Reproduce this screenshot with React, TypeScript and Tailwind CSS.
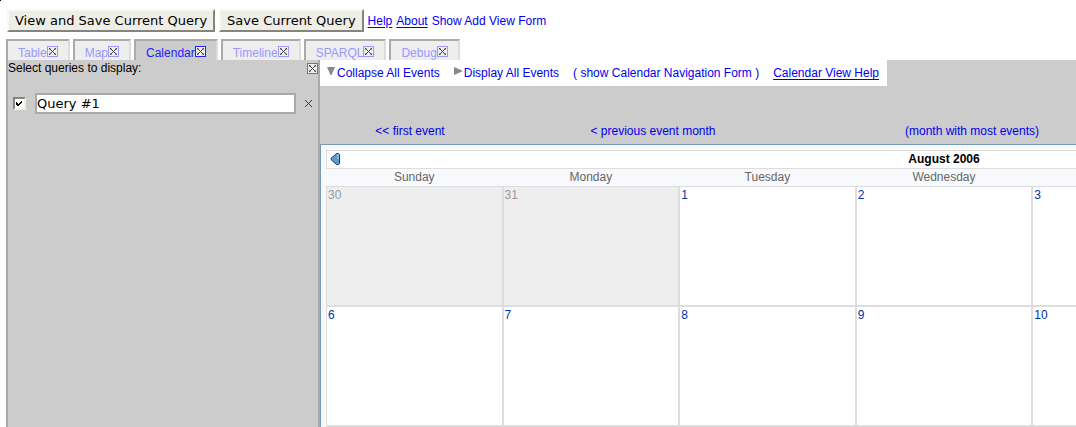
import { useState } from "react";

function CloseBox({ className }: { className: string }) {
  return (
    <svg
      width="11"
      height="11"
      viewBox="0 0 11 11"
      className={className}
      shapeRendering="crispEdges"
      aria-hidden="true"
    >
      <rect x="0.5" y="0.5" width="10" height="10" fill="#eeeeee" stroke="currentColor" />
      <path
        d="M2 2h1v1h-1zM3 3h1v1h-1zM4 4h1v1h-1zM5 5h1v1h-1zM6 6h1v1h-1zM7 7h1v1h-1zM8 8h1v1h-1zM8 2h1v1h-1zM7 3h1v1h-1zM6 4h1v1h-1zM4 6h1v1h-1zM3 7h1v1h-1zM2 8h1v1h-1z"
        fill="#444444"
      />
      <path
        d="M3 2h1v1h-1zM2 3h1v1h-1zM7 2h1v1h-1zM8 3h1v1h-1zM2 7h1v1h-1zM3 8h1v1h-1zM8 7h1v1h-1zM7 8h1v1h-1z"
        fill="#aaaaaa"
      />
    </svg>
  );
}

const tabs = ["Table", "Map", "Calendar", "Timeline", "SPARQL", "Debug"];
const days = ["Sunday", "Monday", "Tuesday", "Wednesday", "Thursday", "Friday", "Saturday"];
const weeks = [
  [30, 31, 1, 2, 3, 4, 5],
  [6, 7, 8, 9, 10, 11, 12],
];

function PushButton({ children }: { children: string }) {
  return (
    <button
      type="button"
      className="h-[23px] border-2 border-t-[#f8f8f4] border-l-[#f8f8f4] border-r-[#85857f] border-b-[#85857f] bg-[#eeeee6] px-1.5 font-['DejaVu_Sans',sans-serif] text-[13px] leading-4 text-black"
    >
      {children}
    </button>
  );
}

export default function App() {
  const [active, setActive] = useState("Calendar");
  const [shown, setShown] = useState(true);
  const [query, setQuery] = useState("Query #1");

  return (
    <div className="flex h-screen flex-col overflow-hidden bg-white font-['Liberation_Sans',Arial,sans-serif] text-[12px] leading-4 text-black">
      <div className="h-px w-px shrink-0 bg-black" />
      <header className="mt-2 flex shrink-0 items-center gap-1 pl-[7px] text-[#0000ee]">
        <PushButton>View and Save Current Query</PushButton>
        <PushButton>Save Current Query</PushButton>
        <a href="#help" className="underline underline-offset-2">Help</a>
        <a href="#about" className="underline underline-offset-2">About</a>
        <button type="button">Show Add View Form</button>
      </header>

      <nav className="mt-[7px] flex h-[21px] shrink-0 gap-[3px] pl-1.5">
        {tabs.map((tab) => (
          <button
            key={tab}
            type="button"
            onClick={() => setActive(tab)}
            className={
              "flex items-center border-t-2 border-r-2 border-l-2 border-t-[#aaaaaa] border-r-[#dddddd] border-l-[#aaaaaa] px-2.5 pt-1 " +
              (tab === active ? "bg-[#cccccc] text-[#2222ff]" : "bg-[#eeeeee] text-[#9999ff]")
            }
          >
            {tab}
            <CloseBox className="mb-0.5" />
          </button>
        ))}
      </nav>

      <div className="flex min-h-0 flex-1 pl-1.5">
        <aside className="w-[314px] shrink-0 border-x-2 border-[#aaaaaa] bg-[#cccccc]">
          <div className="flex items-center justify-between">
            <span>Select queries to display:</span>
            <button type="button" aria-label="Close panel">
              <CloseBox className="text-[#777777]" />
            </button>
          </div>
          <div className="mt-[17px] flex items-center pr-1.5 pl-[5px]">
            <span className="relative mr-[9px] flex">
              <input
                type="checkbox"
                aria-label="Display query"
                checked={shown}
                onChange={(e) => setShown(e.target.checked)}
                className="h-[13px] w-[13px] appearance-none border-2 border-t-[#85857f] border-l-[#85857f] border-r-[#eeeee6] border-b-[#eeeee6] bg-white"
              />
              {shown && (
                <svg
                  width="13"
                  height="13"
                  viewBox="0 0 13 13"
                  shapeRendering="crispEdges"
                  className="pointer-events-none absolute inset-0"
                >
                  <path d="M3 5h1v3h-1zM4 6h1v3h-1zM5 7h1v2h-1zM6 6h1v2h-1zM7 5h1v2h-1zM8 4h1v2h-1z" fill="#000" />
                </svg>
              )}
            </span>
            <input
              type="text"
              aria-label="Query name"
              value={query}
              onChange={(e) => setQuery(e.target.value)}
              className="h-[21px] min-w-0 flex-1 border-2 border-[#aaaaaa] bg-white font-['DejaVu_Sans',sans-serif] text-[13px] leading-4 outline-none"
            />
            <button type="button" aria-label="Remove query" className="ml-[9px]">
              <svg width="7" height="7" viewBox="0 0 7 7" shapeRendering="crispEdges">
                <path
                  d="M0 0h1v1h-1zM1 1h1v1h-1zM2 2h1v1h-1zM3 3h1v1h-1zM4 4h1v1h-1zM5 5h1v1h-1zM6 6h1v1h-1zM6 0h1v1h-1zM5 1h1v1h-1zM4 2h1v1h-1zM2 4h1v1h-1zM1 5h1v1h-1zM0 6h1v1h-1z"
                  fill="#cc0000"
                />
              </svg>
            </button>
          </div>
        </aside>

        <main className="min-w-0 flex-1 overflow-hidden bg-[#cccccc]">
          <div className="flex h-[26px] w-fit items-center bg-white pr-2 pl-[7px] text-[#0000ee]">
            <button type="button" className="flex items-center gap-0.5">
              <svg width="8" height="8" viewBox="0 0 8 8" className="mb-1">
                <path d="M0 0h8l-3.5 8h-1z" fill="#888888" />
              </svg>
              Collapse All Events
            </button>
            <button type="button" className="ml-3.5 flex items-center gap-0.5">
              <svg width="8" height="8" viewBox="0 0 8 8" className="mb-1">
                <path d="M0 0v8l8-3.5v-1z" fill="#888888" />
              </svg>
              Display All Events
            </button>
            <button type="button" className="ml-3.5">( show Calendar Navigation Form )</button>
            <a href="#calendar-help" className="ml-3.5 underline underline-offset-2">
              Calendar View Help
            </a>
          </div>

          <div className="flex h-[58px] items-end pb-[5px] text-[#0000ee]">
            <button type="button" className="w-[180px] shrink-0">&lt;&lt; first event</button>
            <button type="button" className="w-[306px] shrink-0">&lt; previous event month</button>
            <button type="button" className="w-[332px] shrink-0">(month with most events)</button>
          </div>

          <section className="w-[1248px] border border-[#7799bb] bg-[#f8f9fc] p-[5px]">
            <div className="grid h-[18px] grid-cols-[16px_1fr_16px] items-start border border-b-0 border-[#dddddd] bg-white">
              <button type="button" aria-label="Previous month" className="pt-0.5 pl-[3px]">
                <svg width="10" height="12" viewBox="0 0 10 12">
                  <path
                    d="M6.5 0.5h2l1 1v9l-1 1h-2l-5.5-5v-1z"
                    fill="#5b9bd5"
                    stroke="#0b3566"
                    strokeWidth="1"
                    strokeLinejoin="round"
                  />
                  <path d="M7 1.8h1.2v4.4" fill="none" stroke="#b5d8f5" strokeWidth="1" />
                </svg>
              </button>
              <h1 className="text-center font-bold">August 2006</h1>
            </div>
            <table className="w-full table-fixed border-separate border-spacing-0">
              <thead>
                <tr>
                  {days.map((day) => (
                    <th key={day} className="h-[18px] border-t border-[#dddddd] p-0 align-top font-normal text-[#666666]">
                      {day}
                    </th>
                  ))}
                </tr>
              </thead>
              <tbody>
                {weeks.map((week) => (
                  <tr key={week[0]}>
                    {week.map((date) => (
                      <td
                        key={date}
                        className={
                          "h-[120px] border border-[#dddddd] px-px py-0 align-top " +
                          (date >= 30 ? "bg-[#eeeeee] text-[#999999]" : "bg-white text-[#0033aa]")
                        }
                      >
                        {date}
                      </td>
                    ))}
                  </tr>
                ))}
              </tbody>
            </table>
            <div className="border-t border-[#dddddd]" />
          </section>
        </main>
      </div>
    </div>
  );
}
